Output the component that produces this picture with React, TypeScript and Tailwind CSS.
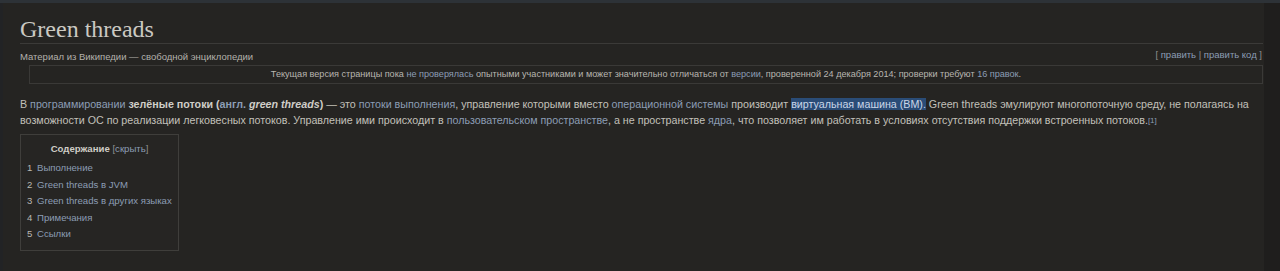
import React from "react";

const A = ({ children }: { children: React.ReactNode }) => (
  <span className="text-[#8c9db5]">{children}</span>
);

export default function App() {
  return (
    <div
      className="h-[271px] w-[1280px] overflow-hidden bg-[#252422] flex flex-col"
      style={{ fontFamily: '"Liberation Sans", Arial, sans-serif' }}
    >
      <div className="h-[3px] bg-[#2d3237] shrink-0" />
      <div className="flex flex-1">
        <div className="w-[3px] bg-[#222325] shrink-0" />
        <div className="flex-1 pl-[17px] pr-[1px]">
          <h1
            className="mt-[12px] h-[29px] leading-[29px] text-[#cbc9c2] border-b border-[#3b3a38]"
            style={{ fontFamily: '"Liberation Serif", serif', fontSize: 24 }}
          >
            Green threads
          </h1>
          <div className="flex justify-between items-start mt-[6px] text-[9.5px] leading-[13px]">
            <span className="text-[#b4b2ac]">Материал из Википедии — свободной энциклопедии</span>
            <span className="text-[#8f8f8f] -mt-[2px] pr-[1px]">
              [ <A>править</A> | <A>править код</A> ]
            </span>
          </div>
          <div className="ml-[9px] mt-[2px] border border-[#3a3937] h-[19px] flex items-center justify-center text-[9.1px] text-[#b8b6b0]">
            <span>
              Текущая версия страницы пока <A>не проверялась</A> опытными участниками и может значительно
              отличаться от <A>версии</A>, проверенной 24 декабря 2014; проверки требуют <A>16 правок</A>.
            </span>
          </div>
          <p className="mt-[12px] text-[10.7px] leading-[16px] text-[#c2c0ba] pr-[10px]">
            В <A>программировании</A> <b className="text-[#d0cec8]">зелёные потоки</b>{" "}
            <b className="text-[#d0cec8]">
              (<A>англ.</A> <i>green threads</i>)
            </b>{" "}
            — это <A>потоки выполнения</A>, управление которыми вместо <A>операционной системы</A>{" "}
            производит{" "}
            <span className="bg-[#2a4c77] text-[#c9d6e8]">виртуальная машина (ВМ).</span> Green threads
            эмулируют многопоточную среду, не полагаясь на возможности ОС по реализации легковесных
            потоков. Управление ими происходит в <A>пользовательском пространстве</A>, а не пространстве{" "}
            <A>ядра</A>, что позволяет им работать в условиях отсутствия поддержки встроенных потоков.
            <sup className="text-[8px] text-[#8c9db5] relative -top-[1px]">[1]</sup>
          </p>
          <div className="mt-[6px] w-[159px] h-[117px] border border-[#3f3e3b] bg-[#262523] pt-[6px] text-[9.6px]">
            <div className="text-center leading-[16px]">
              <b className="text-[#cfcdc6]">Содержание</b>{" "}
              <span className="text-[#8f8f8f]">
                [<A>скрыть</A>]
              </span>
            </div>
            <ul className="mt-[3px] pl-[6px] leading-[16.5px]">
              {["Выполнение", "Green threads в JVM", "Green threads в других языках", "Примечания", "Ссылки"].map(
                (t, i) => (
                  <li key={t} className="flex whitespace-nowrap">
                    <span className="w-[10px] text-[#bab8b2]">{i + 1}</span>
                    <A>{t}</A>
                  </li>
                )
              )}
            </ul>
          </div>
        </div>
        <div className="w-[16px] bg-[#1f1e1d] shrink-0" />
      </div>
    </div>
  );
}
